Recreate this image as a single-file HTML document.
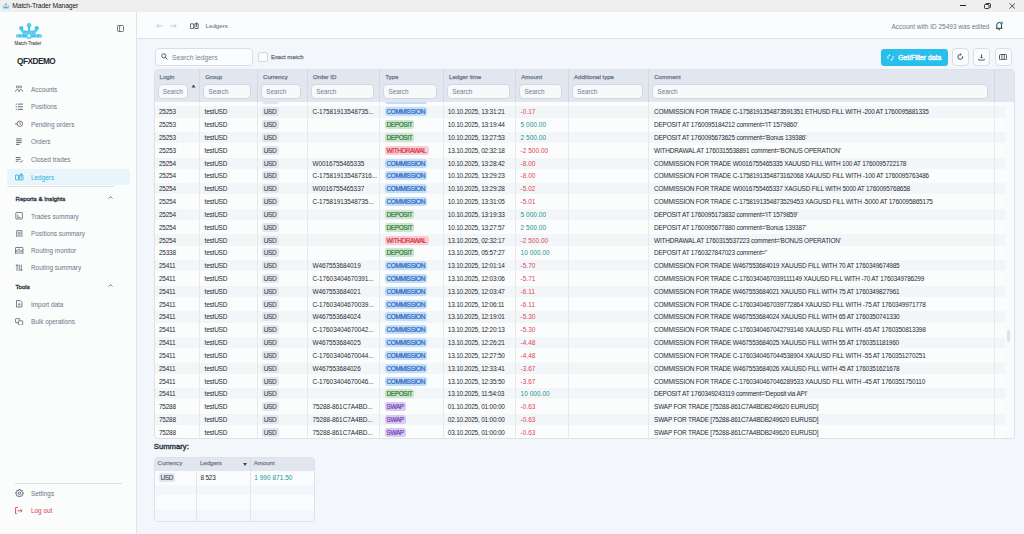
<!DOCTYPE html><html><head><meta charset="utf-8"><title>Match-Trader Manager</title><style>
*{box-sizing:border-box;margin:0;padding:0}
html,body{width:1024px;height:534px;overflow:hidden}
body{position:relative;font-family:"Liberation Sans",sans-serif;background:#f3f6fa;color:#2b2f36}
.abs{position:absolute}
#tb{left:0;top:0;width:1024px;height:12px;background:#efefef}
#tb .t{left:12.3px;top:1.6px;font-size:6.8px;color:#1a1a1a;white-space:nowrap;letter-spacing:-0.17px}
#sb{left:0;top:12px;width:137px;height:522px;background:#fbfcfc;border-right:1px solid #dfe3ea}
.nav{position:absolute;left:0;width:136px;height:14px;font-size:6.4px;color:#6b7685;white-space:nowrap}
.nav .ic{position:absolute;left:15.3px;top:3.2px;width:8.4px;height:7.5px}
.nav .tx{position:absolute;left:31px;top:3.6px}
.sec{position:absolute;left:15.5px;font-size:6.1px;font-weight:normal;-webkit-text-stroke:0.32px currentColor;color:#2d3440;white-space:nowrap}
#hd{left:137px;top:12px;width:887px;height:27px;background:#fbfcfd;border-bottom:1px solid #dde2ea}
.hdr{font-size:6.2px;color:#566070;white-space:nowrap}
#tbl{left:154px;top:69px;width:861px;height:369.5px;border:1px solid #dde2ea;border-radius:4px;overflow:hidden;background:#fbfcfc}
.th{position:absolute;top:0;height:32px;z-index:2;background:#e2e6ee;border-right:1px solid #d3d9e3}
.th .n{position:absolute;left:5.5px;top:2.8px;font-size:6.1px;font-weight:normal;-webkit-text-stroke:0.25px currentColor;color:#6a7487;white-space:nowrap}
.th .s{position:absolute;left:3.8px;top:13.8px;height:15px;background:#f7f9fb;border:1px solid #d2d8e1;border-radius:4px;font-size:6.3px;color:#737c8b;padding-left:4px;line-height:13.6px}
.row{position:absolute;left:0;width:850px;height:12.816px}
.stripe{position:absolute;left:0;width:850px;height:11.3px;background:#f3f6f9}
.t{font-size:6.45px;letter-spacing:-0.2px}
.cell{position:absolute;top:0;height:12.816px;font-size:6.2px;color:#262a31;white-space:nowrap;padding-left:3.9px;display:flex;align-items:center}
.vl{position:absolute;top:0px;width:1px;height:340px;background:#e6e9ef}
.bd{display:inline-block;height:9px;line-height:9.4px;font-size:6.4px;letter-spacing:-0.35px;padding:0 2.3px 0 2px;border-radius:2.5px;font-weight:normal;-webkit-text-stroke:0.22px currentColor;position:relative;top:0px}
.b-COMMISSION{background:#c0ddf9;color:#2e66bd}
.b-DEPOSIT{background:#cae7cc;color:#347a44}
.b-WITHDRAWAL{background:#fbccd1;color:#d2344a}
.b-SWAP{background:#d8c9ef;color:#7446b6}
.b-USD{background:#e2e6ed;color:#464c56;-webkit-text-stroke:0.12px currentColor !important}
.neg{color:#df3f55;letter-spacing:0.05px !important}
.pos{color:#24968f;letter-spacing:0.05px !important}
</style></head><body>
<div id="tb" class="abs">
<svg class="abs" style="left:2px;top:2.5px" width="8" height="6" viewBox="0 0 26 17"><g fill="none" stroke="#3aa7d6" stroke-width="2.2"><circle cx="13" cy="2.5" r="2"/><path d="M13 4.5V13M4 6l3 7M22 6l-3 7M7 13h12M2 14.5h22"/></g><circle cx="13" cy="14" r="2.6" fill="#3aa7d6"/></svg>
<div class="abs t">Match-Trader Manager</div>
<div class="abs" style="left:960px;top:5px;width:6px;height:0.9px;background:#222"></div>
<svg class="abs" style="left:983.5px;top:2.5px" width="7" height="6" viewBox="0 0 7 6"><rect x="0.5" y="1.5" width="4.5" height="4" rx="0.8" fill="none" stroke="#222" stroke-width="0.9"/><path d="M1.8 1.3V0.9Q1.8 0.5 2.3 0.5H5.7Q6.4 0.5 6.4 1.2V4.2Q6.4 4.7 6 4.7H5.6" fill="none" stroke="#222" stroke-width="0.9"/></svg>
<svg class="abs" style="left:1008.5px;top:2.5px" width="6.5" height="6" viewBox="0 0 6 6"><path d="M0.3 0.3L5.7 5.7M5.7 0.3L0.3 5.7" stroke="#222" stroke-width="0.8"/></svg>
</div>
<div id="sb" class="abs">
<svg class="abs" style="left:16px;top:10.8px" width="26" height="16" viewBox="0 0 26 16">
<g fill="#40c3ee">
<circle cx="13" cy="2.2" r="2.2"/><circle cx="5.3" cy="5.2" r="2.1"/><circle cx="20.7" cy="5.2" r="2.1"/>
<path d="M3.6 5.6L7.6 12H18.4L22.4 5.6Q17.5 8.5 13 7.6Q8.5 8.5 3.6 5.6Z"/>
<path d="M1.7 11.2H24.3A1.7 1.7 0 0 1 24.3 14.6H1.7A1.7 1.7 0 0 1 1.7 11.2Z"/>
<rect x="12" y="2.2" width="2" height="6"/>
<circle cx="13" cy="12.9" r="2.8"/>
</g>
<g fill="none" stroke="#fff" stroke-width="0.45" opacity="0.85">
<path d="M7 8.3L9.5 12M19 8.3L16.5 12M10 8.6L11 11.6M16 8.6L15 11.6M13 8.5V11.5M4.5 12.9H7M19 12.9H21.5"/>
</g>
<circle cx="13" cy="12.9" r="1.7" fill="#fff"/><circle cx="2" cy="12.9" r="0.55" fill="#fff"/><circle cx="24" cy="12.9" r="0.55" fill="#fff"/><circle cx="13" cy="2.2" r="0.6" fill="#fff" opacity="0.8"/>
</svg>
<div class="abs" style="left:14.5px;top:28.5px;font-size:4.6px;color:#222;white-space:nowrap;letter-spacing:-0.05px">Match-Trader</div>
<svg class="abs" style="left:117px;top:13px" width="7" height="7" viewBox="0 0 7 7"><rect x="0.5" y="0.5" width="6" height="6" rx="1" fill="none" stroke="#5c6573" stroke-width="0.9"/><path d="M2.6 0.5V6.5" stroke="#5c6573" stroke-width="0.9"/></svg>
<div class="abs" style="left:17px;top:44.6px;font-size:8.2px;font-weight:bold;color:#222831;white-space:nowrap;letter-spacing:-0.45px">QFXDEMO</div>
<div class="nav" style="top:70px"><svg class="ic" viewBox="0 0 9 8"><circle cx="2.6" cy="2" r="1.2" fill="none" stroke="#56606e" stroke-width="0.8"/><circle cx="6" cy="2" r="1.1" fill="none" stroke="#56606e" stroke-width="0.8"/><path d="M0.6 7.2Q0.6 4.8 2.6 4.8Q4.6 4.8 4.6 7.2M4.4 7.2Q4.6 4.8 6 4.8Q8.2 4.8 8.2 7.2" fill="none" stroke="#56606e" stroke-width="0.8"/></svg><span class="tx">Accounts</span></div>
<div class="nav" style="top:87.5px"><svg class="ic" viewBox="0 0 9 8"><path d="M0.8 1.2h1.2M0.8 4h1.2M0.8 6.8h1.2M3 1.2h5.5M3 4h5.5M3 6.8h5.5" stroke="#56606e" stroke-width="1"/></svg><span class="tx">Positions</span></div>
<div class="nav" style="top:105.3px"><svg class="ic" viewBox="0 0 9 8"><circle cx="5.2" cy="4" r="2.9" fill="none" stroke="#56606e" stroke-width="0.9"/><path d="M5.2 2.4V4.1L6.4 4.9M0.4 4h1.4M1.1 3.2v1.6" stroke="#56606e" stroke-width="0.85" fill="none"/></svg><span class="tx">Pending orders</span></div>
<div class="nav" style="top:122.80000000000001px"><svg class="ic" viewBox="0 0 9 8"><path d="M1.2 0.9h6M1.2 2.9h6M1.2 4.9h6M1.2 6.9h3.6" stroke="#56606e" stroke-width="0.95"/></svg><span class="tx">Orders</span></div>
<div class="nav" style="top:140.5px"><svg class="ic" viewBox="0 0 9 8"><path d="M0.8 1.6h5.2M0.8 3.6h5.2M0.8 5.6h3" stroke="#56606e" stroke-width="0.95"/><path d="M5.2 5.6L6.3 6.7L8.4 4.6" stroke="#56606e" stroke-width="0.85" fill="none"/></svg><span class="tx">Closed trades</span></div>
<div class="abs" style="left:7px;top:157px;width:123px;height:16.4px;background:#e8f6fc;border-radius:3px"></div>
<div class="nav" style="top:158.2px;color:#2ab4e4"><svg class="ic" viewBox="0 0 9 8"><path d="M0.5 2.2H3.8V7.4H0.5Z M5 2.2H8.5V7.4H5Z" fill="none" stroke="#2ab4e4" stroke-width="0.9"/><path d="M6.75 5.8V1.2M5.8 2.1L6.75 0.4L7.7 2.1" stroke="#2ab4e4" stroke-width="0.85" fill="none"/></svg><span class="tx">Ledgers</span></div>
<div class="nav" style="top:197.3px"><svg class="ic" viewBox="0 0 9 8"><rect x="0.9" y="0.5" width="7" height="7" rx="0.6" fill="none" stroke="#56606e" stroke-width="0.85"/><path d="M3 5.8V2.8M3 5.8H6" stroke="#56606e" stroke-width="0.8" fill="none"/></svg><span class="tx">Trades summary</span></div>
<div class="nav" style="top:214.4px"><svg class="ic" viewBox="0 0 9 8"><rect x="1.8" y="0.4" width="5.6" height="7.2" rx="0.6" fill="none" stroke="#56606e" stroke-width="0.85"/><path d="M3.1 2.4h3M3.1 4h3M3.1 5.6h3" stroke="#56606e" stroke-width="0.8"/></svg><span class="tx">Positions summary</span></div>
<div class="nav" style="top:231.5px"><svg class="ic" viewBox="0 0 9 8"><rect x="0.5" y="0.5" width="8" height="7" rx="0.6" fill="none" stroke="#56606e" stroke-width="0.85"/><path d="M0.5 3.6h2.5l1.3 -1.6L5.8 4.6L6.8 3.6h1.7M0.5 5.3h8" stroke="#56606e" stroke-width="0.75" fill="none"/></svg><span class="tx">Routing monitor</span></div>
<div class="nav" style="top:248.60000000000002px"><svg class="ic" viewBox="0 0 9 8"><path d="M2.2 7.6V0.8M0.9 2.1L2.2 0.6L3.5 2.1M4.6 0.6V7.2M6.8 0.6V7.2M5.6 6L6.8 7.4L8 6" stroke="#56606e" stroke-width="0.85" fill="none"/></svg><span class="tx">Routing summary</span></div>
<div class="nav" style="top:285px"><svg class="ic" viewBox="0 0 9 8"><path d="M1.6 0.5H5.4L7.4 2.5V7.5H1.6Z" fill="none" stroke="#56606e" stroke-width="0.85"/><path d="M4.5 2.8v3M3.3 4.6L4.5 5.8L5.7 4.6" stroke="#56606e" stroke-width="0.8" fill="none"/></svg><span class="tx">Import data</span></div>
<div class="nav" style="top:302.4px"><svg class="ic" viewBox="0 0 9 8"><rect x="0.6" y="0.6" width="4.4" height="4.4" rx="0.6" fill="none" stroke="#56606e" stroke-width="0.85"/><rect x="3.6" y="3" width="4.6" height="4.5" rx="0.6" fill="#fbfcfc" stroke="#56606e" stroke-width="0.85"/></svg><span class="tx">Bulk operations</span></div>
<div class="nav" style="top:474.3px"><svg class="ic" style="left:15px;top:2.6px;width:9px;height:8.4px" viewBox="0 0 8.4 8"><path d="M7.03 3.38 L7.87 3.52 L7.87 4.48 L7.03 4.62 L6.64 5.56 L7.13 6.26 L6.46 6.93 L5.76 6.44 L4.82 6.83 L4.68 7.67 L3.72 7.67 L3.58 6.83 L2.64 6.44 L1.94 6.93 L1.27 6.26 L1.76 5.56 L1.37 4.62 L0.53 4.48 L0.53 3.52 L1.37 3.38 L1.76 2.44 L1.27 1.74 L1.94 1.07 L2.64 1.56 L3.58 1.17 L3.72 0.33 L4.68 0.33 L4.82 1.17 L5.76 1.56 L6.46 1.07 L7.13 1.74 L6.64 2.44Z" fill="none" stroke="#4b5565" stroke-width="0.8" stroke-linejoin="round"/><circle cx="4.2" cy="4" r="1.2" fill="none" stroke="#4b5565" stroke-width="0.8"/></svg><span class="tx">Settings</span></div>
<div class="nav" style="top:491.5px;color:#e03a4e"><svg class="ic" viewBox="0 0 9 8"><path d="M3 0.5H0.6V7.5H3" stroke="#e03a4e" stroke-width="0.9" fill="none"/><path d="M2.5 4H7.5M5.8 2.2L7.6 4L5.8 5.8" stroke="#e03a4e" stroke-width="0.9" fill="none"/></svg><span class="tx">Log out</span></div>
<div class="abs" style="left:7px;top:174px;width:107px;height:1px;background:#dde1e7"></div>
<div class="abs" style="left:15px;top:471px;width:107px;height:1px;background:#dde1e7"></div>
<div class="sec" style="top:182.9px">Reports &amp; Insights</div>
<div class="sec" style="top:270.6px">Tools</div>
<svg class="abs" style="left:108px;top:184px" width="5" height="3" viewBox="0 0 5 3"><path d="M0.5 2.6L2.5 0.6L4.5 2.6" fill="none" stroke="#555e6b" stroke-width="0.8"/></svg>
<svg class="abs" style="left:108px;top:272px" width="5" height="3" viewBox="0 0 5 3"><path d="M0.5 2.6L2.5 0.6L4.5 2.6" fill="none" stroke="#555e6b" stroke-width="0.8"/></svg>
</div>
<div id="hd" class="abs">
<svg class="abs" style="left:19px;top:11.5px" width="7" height="4" viewBox="0 0 7 4"><path d="M6.8 2H0.8M2.5 0.3L0.8 2L2.5 3.7" fill="none" stroke="#bdc6d1" stroke-width="0.95"/></svg>
<svg class="abs" style="left:33px;top:11.5px" width="7" height="4" viewBox="0 0 7 4"><path d="M0.2 2H6.2M4.5 0.3L6.2 2L4.5 3.7" fill="none" stroke="#bdc6d1" stroke-width="0.95"/></svg>
<svg class="abs" style="left:53px;top:10.3px" width="9" height="7" viewBox="0 0 9 7"><path d="M0.5 1.8H3.6V6.5H0.5Z M4.9 1.8H8.2V6.5H4.9Z" fill="none" stroke="#4f5866" stroke-width="0.85"/><path d="M6.5 5V1.2M5.6 2.1L6.5 0.5L7.4 2.1" stroke="#4f5866" stroke-width="0.8" fill="none"/></svg>
<div class="abs hdr" style="left:68.5px;top:10.4px;color:#5d6674">Ledgers</div>
<div class="abs hdr" style="left:754.5px;top:11px;font-size:6.5px;color:#6f7885">Account with ID 25493 was edited</div>
<svg class="abs" style="left:858px;top:9px" width="9" height="9.5" viewBox="0 0 9 9.5"><path d="M1 7.3H7.3M1.8 7.3V4Q1.8 1.5 4.2 1.5Q6.5 1.5 6.5 4V7.3M3.4 8.4Q4.2 9.4 5 8.4" fill="none" stroke="#222" stroke-width="0.9"/><circle cx="6.8" cy="1.9" r="1.3" fill="#1fb2f0"/></svg>
</div>
<div class="abs" style="left:155.3px;top:48.3px;width:97.4px;height:17.4px;background:#fbfcfd;border:1px solid #d9dee6;border-radius:4px"></div>
<svg class="abs" style="left:161px;top:53px" width="7" height="7" viewBox="0 0 7 7"><circle cx="2.8" cy="2.8" r="2.1" fill="none" stroke="#4a5260" stroke-width="0.9"/><path d="M4.4 4.4L6.4 6.4" stroke="#4a5260" stroke-width="1"/></svg>
<div class="abs" style="left:172px;top:53.8px;font-size:6.8px;color:#7b8593;white-space:nowrap">Search ledgers</div>
<div class="abs" style="left:258.3px;top:52px;width:9.8px;height:10px;border:1px solid #d3d8e0;border-radius:2px;background:#fbfcfd"></div>
<div class="abs" style="left:271px;top:53.6px;font-size:5.9px;font-weight:normal;-webkit-text-stroke:0.25px currentColor;color:#68717e;white-space:nowrap">Exact match</div>
<div class="abs" style="left:881px;top:48.7px;width:66.7px;height:17px;background:#27c0ec;border-radius:3px"></div>
<svg class="abs" style="left:886.8px;top:53.8px" width="7" height="7" viewBox="0 0 7 7"><g fill="none" stroke="#fff" stroke-width="0.9" stroke-linecap="round"><path d="M1 4.6A2.6 2.6 0 0 1 2.6 1.1"/><path d="M6 2.4A2.6 2.6 0 0 1 4.4 5.9"/></g><path d="M2.2 0.2L3.6 1.1L2.3 2.1Z M4.8 6.8L3.4 5.9L4.7 4.9Z" fill="#fff"/></svg>
<div class="abs" style="left:898.2px;top:53.6px;font-size:6.8px;font-weight:normal;-webkit-text-stroke:0.35px currentColor;color:#fff;white-space:nowrap;letter-spacing:0px">Get/Filter data</div>
<div class="abs" style="left:952.3px;top:48.4px;width:17px;height:17.2px;background:#fbfcfd;border:1px solid #d9dee6;border-radius:4px"></div>
<div class="abs" style="left:973.4px;top:48.4px;width:17px;height:17.2px;background:#fbfcfd;border:1px solid #d9dee6;border-radius:4px"></div>
<div class="abs" style="left:994.5px;top:48.4px;width:17px;height:17.2px;background:#fbfcfd;border:1px solid #d9dee6;border-radius:4px"></div>
<svg class="abs" style="left:957px;top:53.4px" width="7" height="7" viewBox="0 0 7 7"><path d="M5.6 3.2A2.4 2.4 0 1 1 3.4 1.5" fill="none" stroke="#48515f" stroke-width="1"/><path d="M3.0 0.2L4.8 1.5L3.0 2.8Z" fill="#48515f"/></svg>
<svg class="abs" style="left:978px;top:53.8px" width="7" height="7" viewBox="0 0 7 7"><path d="M3.5 0.4V3.6" stroke="#48515f" stroke-width="1"/><path d="M1.9 2.9L3.5 4.6L5.1 2.9Z" fill="#48515f"/><path d="M0.8 4.8V6.1H6.2V4.8" fill="none" stroke="#48515f" stroke-width="0.9"/></svg>
<svg class="abs" style="left:999px;top:54px" width="8.2" height="6.2" viewBox="0 0 8.2 6.2"><rect x="0.5" y="0.5" width="7.2" height="5.2" rx="0.8" fill="none" stroke="#4d5664" stroke-width="1"/><path d="M2.9 0.5v5.2M5.3 0.5v5.2" stroke="#4d5664" stroke-width="0.9"/></svg>
<div id="tbl" class="abs">
<div class="th" style="left:-1.0px;width:46.3px"><span class="n">Login</span><div class="s" style="width:29.9px">Search</div></div>
<div class="th" style="left:44.7px;width:58.4px"><span class="n">Group</span><div class="s" style="width:48.0px">Search</div></div>
<div class="th" style="left:102.5px;width:50.6px"><span class="n">Currency</span><div class="s" style="width:40.2px">Search</div></div>
<div class="th" style="left:152.5px;width:72.8px"><span class="n">Order ID</span><div class="s" style="width:62.4px">Search</div></div>
<div class="th" style="left:224.7px;width:64.4px"><span class="n">Type</span><div class="s" style="width:54.0px">Search</div></div>
<div class="th" style="left:288.5px;width:72.8px"><span class="n">Ledger time</span><div class="s" style="width:62.4px">Search</div></div>
<div class="th" style="left:360.7px;width:53.4px"><span class="n">Amount</span><div class="s" style="width:43.0px">Search</div></div>
<div class="th" style="left:413.5px;width:80.8px"><span class="n">Additional type</span><div class="s" style="width:70.4px">Search</div></div>
<div class="th" style="left:493.7px;width:346.2px"><span class="n">Comment</span><div class="s" style="width:335.8px">Search</div></div>
<div class="th" style="left:840.3px;width:22.1px;border-right:none"></div>
<svg class="abs" style="left:36px;top:14px;z-index:3" width="5" height="4" viewBox="0 0 5 4"><path d="M0.5 3.5L2.5 0.5L4.5 3.5Z" fill="#3e4552"/></svg>
<div class="abs" style="left:0;top:32px;width:860px;height:340px;overflow:hidden">
<div class="row" style="top:-9.33px;background:#fbfcfc"><div class="cell" style="left:103.5px"><span class="bd b-USD">USD</span></div><div class="cell" style="left:225.7px"><span class="bd b-COMMISSION">COMMISSION</span></div></div>
<div class="row" style="top:3.49px"><div class="stripe" style="top:0.76px"></div><div class="cell" style="left:0.0px"><span class="t">25253</span></div><div class="cell" style="left:45.7px"><span class="t">testUSD</span></div><div class="cell" style="left:102.9px"><span class="bd b-USD">USD</span></div><div class="cell" style="left:153.5px"><span class="t" style="letter-spacing:-0.06px">C-17581913548735...</span></div><div class="cell" style="left:225.7px"><span class="bd b-COMMISSION">COMMISSION</span></div><div class="cell" style="left:288.9px"><span class="t">10.10.2025, 13:31:21</span></div><div class="cell" style="left:361.7px"><span class="t neg">-0.17</span></div><div class="cell" style="left:495.2px"><span class="t">COMMISSION FOR TRADE C-1758191354873591351 ETHUSD FILL WITH -200 AT 1760095881335</span></div></div>
<div class="row" style="top:16.31px"><div class="cell" style="left:0.0px"><span class="t">25253</span></div><div class="cell" style="left:45.7px"><span class="t">testUSD</span></div><div class="cell" style="left:102.9px"><span class="bd b-USD">USD</span></div><div class="cell" style="left:153.5px"><span class="t" style="letter-spacing:-0.06px"></span></div><div class="cell" style="left:225.7px"><span class="bd b-DEPOSIT">DEPOSIT</span></div><div class="cell" style="left:288.9px"><span class="t">10.10.2025, 13:19:44</span></div><div class="cell" style="left:361.7px"><span class="t pos">5 000.00</span></div><div class="cell" style="left:495.2px"><span class="t">DEPOSIT AT 1760095184212 comment=&#x27;IT 1579860&#x27;</span></div></div>
<div class="row" style="top:29.12px"><div class="stripe" style="top:0.76px"></div><div class="cell" style="left:0.0px"><span class="t">25253</span></div><div class="cell" style="left:45.7px"><span class="t">testUSD</span></div><div class="cell" style="left:102.9px"><span class="bd b-USD">USD</span></div><div class="cell" style="left:153.5px"><span class="t" style="letter-spacing:-0.06px"></span></div><div class="cell" style="left:225.7px"><span class="bd b-DEPOSIT">DEPOSIT</span></div><div class="cell" style="left:288.9px"><span class="t">10.10.2025, 13:27:53</span></div><div class="cell" style="left:361.7px"><span class="t pos">2 500.00</span></div><div class="cell" style="left:495.2px"><span class="t">DEPOSIT AT 1760095673625 comment=&#x27;Bonus 139386&#x27;</span></div></div>
<div class="row" style="top:41.94px"><div class="cell" style="left:0.0px"><span class="t">25253</span></div><div class="cell" style="left:45.7px"><span class="t">testUSD</span></div><div class="cell" style="left:102.9px"><span class="bd b-USD">USD</span></div><div class="cell" style="left:153.5px"><span class="t" style="letter-spacing:-0.06px"></span></div><div class="cell" style="left:225.7px"><span class="bd b-WITHDRAWAL">WITHDRAWAL</span></div><div class="cell" style="left:288.9px"><span class="t">13.10.2025, 02:32:18</span></div><div class="cell" style="left:361.7px"><span class="t neg">-2 500.00</span></div><div class="cell" style="left:495.2px"><span class="t">WITHDRAWAL AT 1760315538891 comment=&#x27;BONUS OPERATION&#x27;</span></div></div>
<div class="row" style="top:54.75px"><div class="stripe" style="top:0.76px"></div><div class="cell" style="left:0.0px"><span class="t">25254</span></div><div class="cell" style="left:45.7px"><span class="t">testUSD</span></div><div class="cell" style="left:102.9px"><span class="bd b-USD">USD</span></div><div class="cell" style="left:153.5px"><span class="t" style="letter-spacing:-0.06px">W0016755465335</span></div><div class="cell" style="left:225.7px"><span class="bd b-COMMISSION">COMMISSION</span></div><div class="cell" style="left:288.9px"><span class="t">10.10.2025, 13:28:42</span></div><div class="cell" style="left:361.7px"><span class="t neg">-8.00</span></div><div class="cell" style="left:495.2px"><span class="t">COMMISSION FOR TRADE W0016755465335 XAUUSD FILL WITH 100 AT 1760095722178</span></div></div>
<div class="row" style="top:67.57px"><div class="cell" style="left:0.0px"><span class="t">25254</span></div><div class="cell" style="left:45.7px"><span class="t">testUSD</span></div><div class="cell" style="left:102.9px"><span class="bd b-USD">USD</span></div><div class="cell" style="left:153.5px"><span class="t" style="letter-spacing:-0.06px">C-175819135487316...</span></div><div class="cell" style="left:225.7px"><span class="bd b-COMMISSION">COMMISSION</span></div><div class="cell" style="left:288.9px"><span class="t">10.10.2025, 13:29:23</span></div><div class="cell" style="left:361.7px"><span class="t neg">-8.00</span></div><div class="cell" style="left:495.2px"><span class="t">COMMISSION FOR TRADE C-1758191354873162068 XAUUSD FILL WITH -100 AT 1760095763486</span></div></div>
<div class="row" style="top:80.39px"><div class="stripe" style="top:0.76px"></div><div class="cell" style="left:0.0px"><span class="t">25254</span></div><div class="cell" style="left:45.7px"><span class="t">testUSD</span></div><div class="cell" style="left:102.9px"><span class="bd b-USD">USD</span></div><div class="cell" style="left:153.5px"><span class="t" style="letter-spacing:-0.06px">W0016755465337</span></div><div class="cell" style="left:225.7px"><span class="bd b-COMMISSION">COMMISSION</span></div><div class="cell" style="left:288.9px"><span class="t">10.10.2025, 13:29:28</span></div><div class="cell" style="left:361.7px"><span class="t neg">-5.02</span></div><div class="cell" style="left:495.2px"><span class="t">COMMISSION FOR TRADE W0016755465337 XAGUSD FILL WITH 5000 AT 1760095768658</span></div></div>
<div class="row" style="top:93.20px"><div class="cell" style="left:0.0px"><span class="t">25254</span></div><div class="cell" style="left:45.7px"><span class="t">testUSD</span></div><div class="cell" style="left:102.9px"><span class="bd b-USD">USD</span></div><div class="cell" style="left:153.5px"><span class="t" style="letter-spacing:-0.06px">C-17581913548735...</span></div><div class="cell" style="left:225.7px"><span class="bd b-COMMISSION">COMMISSION</span></div><div class="cell" style="left:288.9px"><span class="t">10.10.2025, 13:31:05</span></div><div class="cell" style="left:361.7px"><span class="t neg">-5.01</span></div><div class="cell" style="left:495.2px"><span class="t">COMMISSION FOR TRADE C-1758191354873529453 XAGUSD FILL WITH -5000 AT 1760095865175</span></div></div>
<div class="row" style="top:106.02px"><div class="stripe" style="top:0.76px"></div><div class="cell" style="left:0.0px"><span class="t">25254</span></div><div class="cell" style="left:45.7px"><span class="t">testUSD</span></div><div class="cell" style="left:102.9px"><span class="bd b-USD">USD</span></div><div class="cell" style="left:153.5px"><span class="t" style="letter-spacing:-0.06px"></span></div><div class="cell" style="left:225.7px"><span class="bd b-DEPOSIT">DEPOSIT</span></div><div class="cell" style="left:288.9px"><span class="t">10.10.2025, 13:19:33</span></div><div class="cell" style="left:361.7px"><span class="t pos">5 000.00</span></div><div class="cell" style="left:495.2px"><span class="t">DEPOSIT AT 1760095173832 comment=&#x27;IT 1579859&#x27;</span></div></div>
<div class="row" style="top:118.83px"><div class="cell" style="left:0.0px"><span class="t">25254</span></div><div class="cell" style="left:45.7px"><span class="t">testUSD</span></div><div class="cell" style="left:102.9px"><span class="bd b-USD">USD</span></div><div class="cell" style="left:153.5px"><span class="t" style="letter-spacing:-0.06px"></span></div><div class="cell" style="left:225.7px"><span class="bd b-DEPOSIT">DEPOSIT</span></div><div class="cell" style="left:288.9px"><span class="t">10.10.2025, 13:27:57</span></div><div class="cell" style="left:361.7px"><span class="t pos">2 500.00</span></div><div class="cell" style="left:495.2px"><span class="t">DEPOSIT AT 1760095677880 comment=&#x27;Bonus 139387&#x27;</span></div></div>
<div class="row" style="top:131.65px"><div class="stripe" style="top:0.76px"></div><div class="cell" style="left:0.0px"><span class="t">25254</span></div><div class="cell" style="left:45.7px"><span class="t">testUSD</span></div><div class="cell" style="left:102.9px"><span class="bd b-USD">USD</span></div><div class="cell" style="left:153.5px"><span class="t" style="letter-spacing:-0.06px"></span></div><div class="cell" style="left:225.7px"><span class="bd b-WITHDRAWAL">WITHDRAWAL</span></div><div class="cell" style="left:288.9px"><span class="t">13.10.2025, 02:32:17</span></div><div class="cell" style="left:361.7px"><span class="t neg">-2 500.00</span></div><div class="cell" style="left:495.2px"><span class="t">WITHDRAWAL AT 1760315537223 comment=&#x27;BONUS OPERATION&#x27;</span></div></div>
<div class="row" style="top:144.47px"><div class="cell" style="left:0.0px"><span class="t">25338</span></div><div class="cell" style="left:45.7px"><span class="t">testUSD</span></div><div class="cell" style="left:102.9px"><span class="bd b-USD">USD</span></div><div class="cell" style="left:153.5px"><span class="t" style="letter-spacing:-0.06px"></span></div><div class="cell" style="left:225.7px"><span class="bd b-DEPOSIT">DEPOSIT</span></div><div class="cell" style="left:288.9px"><span class="t">13.10.2025, 05:57:27</span></div><div class="cell" style="left:361.7px"><span class="t pos">10 000.00</span></div><div class="cell" style="left:495.2px"><span class="t">DEPOSIT AT 1760327847023 comment=&#x27;&#x27;</span></div></div>
<div class="row" style="top:157.28px"><div class="stripe" style="top:0.76px"></div><div class="cell" style="left:0.0px"><span class="t">25411</span></div><div class="cell" style="left:45.7px"><span class="t">testUSD</span></div><div class="cell" style="left:102.9px"><span class="bd b-USD">USD</span></div><div class="cell" style="left:153.5px"><span class="t" style="letter-spacing:-0.06px">W467553684019</span></div><div class="cell" style="left:225.7px"><span class="bd b-COMMISSION">COMMISSION</span></div><div class="cell" style="left:288.9px"><span class="t">13.10.2025, 12:01:14</span></div><div class="cell" style="left:361.7px"><span class="t neg">-5.70</span></div><div class="cell" style="left:495.2px"><span class="t">COMMISSION FOR TRADE W467553684019 XAUUSD FILL WITH 70 AT 1760349674985</span></div></div>
<div class="row" style="top:170.10px"><div class="cell" style="left:0.0px"><span class="t">25411</span></div><div class="cell" style="left:45.7px"><span class="t">testUSD</span></div><div class="cell" style="left:102.9px"><span class="bd b-USD">USD</span></div><div class="cell" style="left:153.5px"><span class="t" style="letter-spacing:-0.06px">C-17603404670391...</span></div><div class="cell" style="left:225.7px"><span class="bd b-COMMISSION">COMMISSION</span></div><div class="cell" style="left:288.9px"><span class="t">13.10.2025, 12:03:06</span></div><div class="cell" style="left:361.7px"><span class="t neg">-5.71</span></div><div class="cell" style="left:495.2px"><span class="t">COMMISSION FOR TRADE C-1760340467039111149 XAUUSD FILL WITH -70 AT 1760349786299</span></div></div>
<div class="row" style="top:182.91px"><div class="stripe" style="top:0.76px"></div><div class="cell" style="left:0.0px"><span class="t">25411</span></div><div class="cell" style="left:45.7px"><span class="t">testUSD</span></div><div class="cell" style="left:102.9px"><span class="bd b-USD">USD</span></div><div class="cell" style="left:153.5px"><span class="t" style="letter-spacing:-0.06px">W467553684021</span></div><div class="cell" style="left:225.7px"><span class="bd b-COMMISSION">COMMISSION</span></div><div class="cell" style="left:288.9px"><span class="t">13.10.2025, 12:03:47</span></div><div class="cell" style="left:361.7px"><span class="t neg">-6.11</span></div><div class="cell" style="left:495.2px"><span class="t">COMMISSION FOR TRADE W467553684021 XAUUSD FILL WITH 75 AT 1760349827961</span></div></div>
<div class="row" style="top:195.73px"><div class="cell" style="left:0.0px"><span class="t">25411</span></div><div class="cell" style="left:45.7px"><span class="t">testUSD</span></div><div class="cell" style="left:102.9px"><span class="bd b-USD">USD</span></div><div class="cell" style="left:153.5px"><span class="t" style="letter-spacing:-0.06px">C-17603404670039...</span></div><div class="cell" style="left:225.7px"><span class="bd b-COMMISSION">COMMISSION</span></div><div class="cell" style="left:288.9px"><span class="t">13.10.2025, 12:06:11</span></div><div class="cell" style="left:361.7px"><span class="t neg">-6.11</span></div><div class="cell" style="left:495.2px"><span class="t">COMMISSION FOR TRADE C-1760340467039772864 XAUUSD FILL WITH -75 AT 1760349971778</span></div></div>
<div class="row" style="top:208.55px"><div class="stripe" style="top:0.76px"></div><div class="cell" style="left:0.0px"><span class="t">25411</span></div><div class="cell" style="left:45.7px"><span class="t">testUSD</span></div><div class="cell" style="left:102.9px"><span class="bd b-USD">USD</span></div><div class="cell" style="left:153.5px"><span class="t" style="letter-spacing:-0.06px">W467553684024</span></div><div class="cell" style="left:225.7px"><span class="bd b-COMMISSION">COMMISSION</span></div><div class="cell" style="left:288.9px"><span class="t">13.10.2025, 12:19:01</span></div><div class="cell" style="left:361.7px"><span class="t neg">-5.30</span></div><div class="cell" style="left:495.2px"><span class="t">COMMISSION FOR TRADE W467553684024 XAUUSD FILL WITH 65 AT 1760350741330</span></div></div>
<div class="row" style="top:221.36px"><div class="cell" style="left:0.0px"><span class="t">25411</span></div><div class="cell" style="left:45.7px"><span class="t">testUSD</span></div><div class="cell" style="left:102.9px"><span class="bd b-USD">USD</span></div><div class="cell" style="left:153.5px"><span class="t" style="letter-spacing:-0.06px">C-17603404670042...</span></div><div class="cell" style="left:225.7px"><span class="bd b-COMMISSION">COMMISSION</span></div><div class="cell" style="left:288.9px"><span class="t">13.10.2025, 12:20:13</span></div><div class="cell" style="left:361.7px"><span class="t neg">-5.30</span></div><div class="cell" style="left:495.2px"><span class="t">COMMISSION FOR TRADE C-1760340467042793146 XAUUSD FILL WITH -65 AT 1760350813398</span></div></div>
<div class="row" style="top:234.18px"><div class="stripe" style="top:0.76px"></div><div class="cell" style="left:0.0px"><span class="t">25411</span></div><div class="cell" style="left:45.7px"><span class="t">testUSD</span></div><div class="cell" style="left:102.9px"><span class="bd b-USD">USD</span></div><div class="cell" style="left:153.5px"><span class="t" style="letter-spacing:-0.06px">W467553684025</span></div><div class="cell" style="left:225.7px"><span class="bd b-COMMISSION">COMMISSION</span></div><div class="cell" style="left:288.9px"><span class="t">13.10.2025, 12:26:21</span></div><div class="cell" style="left:361.7px"><span class="t neg">-4.48</span></div><div class="cell" style="left:495.2px"><span class="t">COMMISSION FOR TRADE W467553684025 XAUUSD FILL WITH 55 AT 1760351181960</span></div></div>
<div class="row" style="top:246.99px"><div class="cell" style="left:0.0px"><span class="t">25411</span></div><div class="cell" style="left:45.7px"><span class="t">testUSD</span></div><div class="cell" style="left:102.9px"><span class="bd b-USD">USD</span></div><div class="cell" style="left:153.5px"><span class="t" style="letter-spacing:-0.06px">C-17603404670044...</span></div><div class="cell" style="left:225.7px"><span class="bd b-COMMISSION">COMMISSION</span></div><div class="cell" style="left:288.9px"><span class="t">13.10.2025, 12:27:50</span></div><div class="cell" style="left:361.7px"><span class="t neg">-4.48</span></div><div class="cell" style="left:495.2px"><span class="t">COMMISSION FOR TRADE C-1760340467044538904 XAUUSD FILL WITH -55 AT 1760351270251</span></div></div>
<div class="row" style="top:259.81px"><div class="stripe" style="top:0.76px"></div><div class="cell" style="left:0.0px"><span class="t">25411</span></div><div class="cell" style="left:45.7px"><span class="t">testUSD</span></div><div class="cell" style="left:102.9px"><span class="bd b-USD">USD</span></div><div class="cell" style="left:153.5px"><span class="t" style="letter-spacing:-0.06px">W467553684026</span></div><div class="cell" style="left:225.7px"><span class="bd b-COMMISSION">COMMISSION</span></div><div class="cell" style="left:288.9px"><span class="t">13.10.2025, 12:33:41</span></div><div class="cell" style="left:361.7px"><span class="t neg">-3.67</span></div><div class="cell" style="left:495.2px"><span class="t">COMMISSION FOR TRADE W467553684026 XAUUSD FILL WITH 45 AT 1760351621678</span></div></div>
<div class="row" style="top:272.63px"><div class="cell" style="left:0.0px"><span class="t">25411</span></div><div class="cell" style="left:45.7px"><span class="t">testUSD</span></div><div class="cell" style="left:102.9px"><span class="bd b-USD">USD</span></div><div class="cell" style="left:153.5px"><span class="t" style="letter-spacing:-0.06px">C-17603404670046...</span></div><div class="cell" style="left:225.7px"><span class="bd b-COMMISSION">COMMISSION</span></div><div class="cell" style="left:288.9px"><span class="t">13.10.2025, 12:35:50</span></div><div class="cell" style="left:361.7px"><span class="t neg">-3.67</span></div><div class="cell" style="left:495.2px"><span class="t">COMMISSION FOR TRADE C-1760340467046289533 XAUUSD FILL WITH -45 AT 1760351750110</span></div></div>
<div class="row" style="top:285.44px"><div class="stripe" style="top:0.76px"></div><div class="cell" style="left:0.0px"><span class="t">25411</span></div><div class="cell" style="left:45.7px"><span class="t">testUSD</span></div><div class="cell" style="left:102.9px"><span class="bd b-USD">USD</span></div><div class="cell" style="left:153.5px"><span class="t" style="letter-spacing:-0.06px"></span></div><div class="cell" style="left:225.7px"><span class="bd b-DEPOSIT">DEPOSIT</span></div><div class="cell" style="left:288.9px"><span class="t">13.10.2025, 11:54:03</span></div><div class="cell" style="left:361.7px"><span class="t pos">10 000.00</span></div><div class="cell" style="left:495.2px"><span class="t">DEPOSIT AT 1760349243119 comment=&#x27;Deposit via API&#x27;</span></div></div>
<div class="row" style="top:298.26px"><div class="cell" style="left:0.0px"><span class="t">75288</span></div><div class="cell" style="left:45.7px"><span class="t">testUSD</span></div><div class="cell" style="left:102.9px"><span class="bd b-USD">USD</span></div><div class="cell" style="left:153.5px"><span class="t" style="letter-spacing:-0.06px">75288-861C7A4BD...</span></div><div class="cell" style="left:225.7px"><span class="bd b-SWAP">SWAP</span></div><div class="cell" style="left:288.9px"><span class="t">01.10.2025, 01:00:00</span></div><div class="cell" style="left:361.7px"><span class="t neg">-0.63</span></div><div class="cell" style="left:495.2px"><span class="t">SWAP FOR TRADE [75288-861C7A4BDB249620 EURUSD]</span></div></div>
<div class="row" style="top:311.07px"><div class="stripe" style="top:0.76px"></div><div class="cell" style="left:0.0px"><span class="t">75288</span></div><div class="cell" style="left:45.7px"><span class="t">testUSD</span></div><div class="cell" style="left:102.9px"><span class="bd b-USD">USD</span></div><div class="cell" style="left:153.5px"><span class="t" style="letter-spacing:-0.06px">75288-861C7A4BD...</span></div><div class="cell" style="left:225.7px"><span class="bd b-SWAP">SWAP</span></div><div class="cell" style="left:288.9px"><span class="t">02.10.2025, 01:00:00</span></div><div class="cell" style="left:361.7px"><span class="t neg">-0.63</span></div><div class="cell" style="left:495.2px"><span class="t">SWAP FOR TRADE [75288-861C7A4BDB249620 EURUSD]</span></div></div>
<div class="row" style="top:323.89px"><div class="cell" style="left:0.0px"><span class="t">75288</span></div><div class="cell" style="left:45.7px"><span class="t">testUSD</span></div><div class="cell" style="left:102.9px"><span class="bd b-USD">USD</span></div><div class="cell" style="left:153.5px"><span class="t" style="letter-spacing:-0.06px">75288-861C7A4BD...</span></div><div class="cell" style="left:225.7px"><span class="bd b-SWAP">SWAP</span></div><div class="cell" style="left:288.9px"><span class="t">03.10.2025, 01:00:00</span></div><div class="cell" style="left:361.7px"><span class="t neg">-0.63</span></div><div class="cell" style="left:495.2px"><span class="t">SWAP FOR TRADE [75288-861C7A4BDB249620 EURUSD]</span></div></div>
<div class="vl" style="left:44.2px"></div>
<div class="vl" style="left:102.0px"></div>
<div class="vl" style="left:152.0px"></div>
<div class="vl" style="left:224.2px"></div>
<div class="vl" style="left:288.0px"></div>
<div class="vl" style="left:360.2px"></div>
<div class="vl" style="left:413.0px"></div>
<div class="vl" style="left:493.2px"></div>
<div class="vl" style="left:838.8px"></div>
</div>
<div class="abs" style="left:850px;top:32px;width:12px;height:340px;background:#f9fafb"></div>
<div class="abs" style="left:851.6px;top:259.8px;width:3.6px;height:12.4px;background:#dde1e8;border-radius:2px"></div>
</div>
<div class="abs" style="left:153.8px;top:442.2px;font-size:7.7px;font-weight:normal;-webkit-text-stroke:0.35px currentColor;color:#2a2f37;white-space:nowrap">Summary:</div>
<div class="abs" style="left:154.2px;top:456.7px;width:161.3px;height:65.3px;border:1px solid #dde2ea;border-radius:4px;overflow:hidden;background:#fafbfc">
<div class="abs" style="left:-0.6px;top:0;width:43.0px;height:13.2px;background:#e2e6ee;border-right:1px solid #d3d9e3"><span class="abs" style="left:2.9px;top:1.7px;font-size:6.1px;font-weight:normal;-webkit-text-stroke:0.25px currentColor;color:#76808f;white-space:nowrap">Currency</span></div>
<div class="abs" style="left:41.8px;top:0;width:54.4px;height:13.2px;background:#e2e6ee;border-right:1px solid #d3d9e3"><span class="abs" style="left:2.9px;top:1.7px;font-size:6.1px;font-weight:normal;-webkit-text-stroke:0.25px currentColor;color:#76808f;white-space:nowrap">Ledgers</span></div>
<div class="abs" style="left:95.6px;top:0;width:65.7px;height:13.2px;background:#e2e6ee;border-right:none"><span class="abs" style="left:2.9px;top:1.7px;font-size:6.1px;font-weight:normal;-webkit-text-stroke:0.25px currentColor;color:#76808f;white-space:nowrap">Amount</span></div>
<svg class="abs" style="left:87.5px;top:5.2px" width="4" height="3" viewBox="0 0 4 3"><path d="M0 0H4L2 3Z" fill="#3e4552"/></svg>
<div class="abs" style="left:0;top:26.85px;width:162px;height:10.7px;background:#f3f6fa"></div>
<div class="abs" style="left:0;top:52.45px;width:162px;height:10.7px;background:#f3f6fa"></div>
<div class="abs" style="left:0;top:13px;width:160px;height:12.8px">
<div class="cell" style="left:0;padding-left:3.5px"><span class="bd b-USD" style="padding:0 2px 0 1.8px">USD</span></div>
<div class="cell" style="left:41.4px"><span class="t">8 523</span></div>
<div class="cell" style="left:95.2px"><span class="t pos">1 990 871.50</span></div>
</div>
<div class="abs" style="left:40.8px;top:13px;width:1px;height:52px;background:#e3e7ed"></div>
<div class="abs" style="left:94.6px;top:13px;width:1px;height:52px;background:#e3e7ed"></div>
</div>
</body></html>
